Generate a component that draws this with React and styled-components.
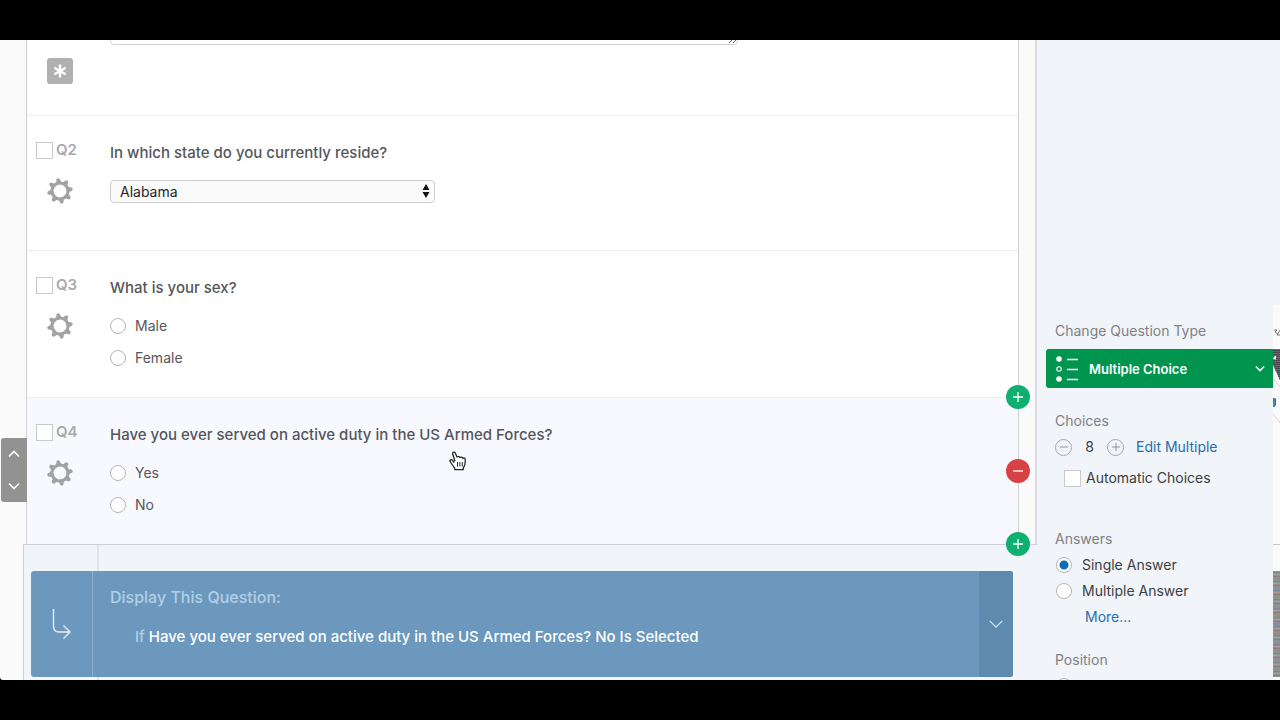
import React from 'react'
import styled, { createGlobalStyle } from 'styled-components'

const colors = {
  text: '#54565b',
  dark: '#3c3e44',
  muted: '#a9a9ab',
  heading: '#808185',
  line: '#cfd0d4',
  softLine: '#ededee',
  panel: '#f1f4f9',
  active: '#f8f9fe',
  blue: '#6b98bc',
  blueDark: '#5e8aae',
  link: '#1f6fb2',
  green: '#00954f',
  add: '#0eaf70',
  remove: '#d64143',
}

const TEETH = [0, 45, 90, 135, 180, 225, 270, 315]

const Gear = () => (
  <svg width="26" height="26" viewBox="-13 -13 26 26" aria-hidden="true">
    <g transform="rotate(-9)" fill="#a2a2a3">
      <circle r="8" fill="none" stroke="#a2a2a3" strokeWidth="3.2" />
      {TEETH.map((a) => (
        <path key={a} d="M-2.6 -8.6 L-1.5 -12.2 Q0 -13.4 1.5 -12.2 L2.6 -8.6 Z" transform={`rotate(${a})`} />
      ))}
    </g>
  </svg>
)

const Chevron = ({ w = 12, up = false, stroke = 1.6 }) => (
  <svg width={w} height={w / 2 + 2} viewBox="0 0 12 8" fill="none" stroke="currentColor" strokeWidth={stroke} aria-hidden="true">
    <path d={up ? 'M1 6.5 L6 1.5 L11 6.5' : 'M1 1.5 L6 6.5 L11 1.5'} />
  </svg>
)

const Sign = ({ plus = false, size = 12, stroke = 1.3 }) => (
  <svg width={size} height={size} viewBox="0 0 12 12" fill="none" stroke="currentColor" strokeWidth={stroke} aria-hidden="true">
    <path d={plus ? 'M1 6 H11 M6 1 V11' : 'M1 6 H11'} />
  </svg>
)

const ListIcon = () => (
  <svg width="24" height="28" viewBox="0 0 24 28" fill="none" stroke="#fff" aria-hidden="true">
    <circle cx="4" cy="4" r="2.8" fill="#fff" stroke="none" />
    <circle cx="4" cy="14" r="2.2" strokeWidth="1.1" />
    <circle cx="4" cy="24" r="2.8" fill="#fff" stroke="none" />
    <path d="M12 4.5 H23 M12 14.5 H23 M12 24.5 H23" strokeWidth="1.4" />
  </svg>
)

const Branch = () => (
  <svg width="20" height="32" viewBox="0 0 20 32" fill="none" stroke="#e4eff8" strokeWidth="1.4" aria-hidden="true">
    <path d="M1.5 1 V18 Q1.5 24 7 24 H18 M11.5 17.5 L18 24 L11.5 30.5" />
  </svg>
)

const Edge = () => (
  <svg width="7" height="640" viewBox="0 0 7 640" aria-hidden="true">
    <defs>
      <pattern id="lines" width="7" height="9" patternUnits="userSpaceOnUse">
        <rect width="7" height="9" fill="#8f9291" />
        <rect y="1" width="7" height="1" fill="#77899c" />
        <rect y="3" width="7" height="1" fill="#a5a192" />
        <rect y="5" width="7" height="1" fill="#9a7588" />
        <rect y="7" width="7" height="1" fill="#839a83" />
      </pattern>
      <pattern id="dark" width="7" height="4" patternUnits="userSpaceOnUse">
        <rect width="7" height="4" fill="#4b454c" />
        <rect y="1" width="7" height="1" fill="#7b6186" />
        <rect y="3" width="7" height="1" fill="#5c6a58" />
      </pattern>
    </defs>
    <rect width="7" height="640" fill={colors.panel} />
    <rect y="265" width="7" height="375" fill="#fafafb" />
    <path d="M1 290 H4 L2 292 L5 294 M7 290 L4 295 H7" fill="none" stroke="#77777a" />
    <rect y="309" width="7" height="23" fill="url(#dark)" />
    <path d="M1 317 L7 322" stroke="#fff" strokeWidth="3" />
    <path d="M0 325 L7 341 V309" fill="url(#dark)" />
    <path d="M0 325 L7 341 V375 L0 340 Z" fill="#fafafb" />
    <path d="M0 338 L7 347 M0 374 L7 383" stroke="#d5d5d8" />
    <path d="M1 358 V367" stroke="#4e83a6" strokeWidth="2" />
    <path d="M2 362 H3" stroke="#65517f" strokeWidth="7" />
    <path d="M0 504.500 H7" stroke="#c7c8cc" />
    <rect y="531" width="7" height="106" fill="url(#lines)" />
  </svg>
)

const Hand = () => (
  <svg width="18" height="20" viewBox="0 0 18 20" aria-hidden="true">
    <path
      d="M5.200 11.500 L3.600 9.400 Q2.300 8.200 1.300 9 Q.6 9.800 1.500 11 L4.200 15 Q5 16.300 5.700 17 V18.600 H14.300 V17 Q16.200 14.500 16.200 11 V8.300 Q16 6.800 14.600 7 L13.800 7.300 Q13.400 5.900 12 6.100 L11 6.500 Q10.400 5.300 9 5.600 L8 6 L6.400 2.200 Q5.700 .8 4.500 1.200 Q3.300 1.700 3.800 3.300 L6 10.200"
      fill="#fff"
      stroke="#252528"
      strokeWidth="1.300"
      strokeLinejoin="round"
    />
    <path d="M8.500 11 V15.500 M10.900 11 V15.500 M13.300 11 V15.500" stroke="#252528" strokeWidth="1" />
  </svg>
)

const Question = ({ id, title, active, options, children }) => (
  <Row $active={active}>
    <Meta>
      <Tag>
        <Tick type="checkbox" />
        {id}
      </Tag>
      <GearButton aria-label={`${id} options`}>
        <Gear />
      </GearButton>
    </Meta>
    <Content>
      <Title>{title}</Title>
      {options && (
        <Options>
          {options.map((o) => (
            <Option key={o}>
              <Dot type="radio" name={id} />
              {o}
            </Option>
          ))}
        </Options>
      )}
      {children}
    </Content>
  </Row>
)

const App = () => {
  return (
    <Screen>
      <Global />
      <Editor>
        <Main>
          <Survey>
            <Questions>
              <FirstRow>
                <Meta>
                  <Required aria-label="Required">
                    <svg width="14" height="14" viewBox="-7 -7 14 14" stroke="#fff" strokeWidth="2.400" aria-hidden="true">
                      <path d="M0 -6.500 V6.500 M-5.600 -3.200 L5.600 3.200 M-5.600 3.200 L5.600 -3.200" />
                    </svg>
                  </Required>
                </Meta>
                <Content>
                  <Answer aria-label="Answer" />
                </Content>
              </FirstRow>
              <Question id="Q2" title="In which state do you currently reside?">
                <Picker>
                  <State aria-label="State" defaultValue="Alabama">
                    <option>Alabama</option>
                  </State>
                  <Arrows width="8" height="14" viewBox="0 0 8 14" aria-hidden="true">
                    <path d="M4 0 L7.500 6 H.5 Z M4 14 L.5 8 H7.500 Z" fill="#111" />
                  </Arrows>
                </Picker>
              </Question>
              <Question id="Q3" title="What is your sex?" options={['Male', 'Female']} />
              <ActiveWrap>
                <Question id="Q4" title="Have you ever served on active duty in the US Armed Forces?" active options={['Yes', 'No']} />
                <Rail>
                  <Round aria-label="Add question above" $color={colors.add}><Sign plus /></Round>
                  <Round aria-label="Remove question" $color={colors.remove}><Sign /></Round>
                  <Round aria-label="Add question below" $color={colors.add}><Sign plus /></Round>
                </Rail>
                <Pointer><Hand /></Pointer>
              </ActiveWrap>
            </Questions>
          </Survey>
          <Next>
            <Logic>
              <LogicIcon><Branch /></LogicIcon>
              <LogicBody>
                <LogicTitle>Display This Question:</LogicTitle>
                <LogicRule>
                  <span>If</span> Have you ever served on active duty in the US Armed Forces? No Is Selected
                </LogicRule>
              </LogicBody>
              <LogicMenu aria-label="Logic menu"><Chevron w={16} stroke={1.1} /></LogicMenu>
            </Logic>
          </Next>
          <Mover>
            <MoveButton aria-label="Move up"><Chevron up /></MoveButton>
            <MoveButton aria-label="Move down"><Chevron /></MoveButton>
          </Mover>
        </Main>
        <Side>
          <SideHead>Change Question Type</SideHead>
          <TypeButton>
            <ListIcon />
            <span>Multiple Choice</span>
            <Chevron w={10} stroke={1.8} />
          </TypeButton>
          <Group>
            <SideHead>Choices</SideHead>
            <Stepper>
              <Step aria-label="Fewer choices"><Sign size={10} stroke={1.2} /></Step>
              <Count>8</Count>
              <Step aria-label="More choices"><Sign plus size={10} stroke={1.2} /></Step>
              <Link href="#edit">Edit Multiple</Link>
            </Stepper>
            <AutoLabel>
              <Tick type="checkbox" />
              Automatic Choices
            </AutoLabel>
          </Group>
          <Group $gap={41}>
            <SideHead>Answers</SideHead>
            <SideOption><Dot type="radio" name="answers" defaultChecked />Single Answer</SideOption>
            <SideOption><Dot type="radio" name="answers" />Multiple Answer</SideOption>
            <More href="#more">More...</More>
          </Group>
          <Group>
            <SideHead>Position</SideHead>
            <SideOption><Dot type="radio" name="position" aria-label="Position" /></SideOption>
          </Group>
        </Side>
        <Edge />
      </Editor>
    </Screen>
  )
}

const Global = createGlobalStyle`
* { box-sizing: border-box; }
body { margin: 0; background: #000; }
button, input, select, textarea { font: inherit; margin: 0; }
button { border: 0; padding: 0; background: none; }
`

const Screen = styled.div`
height: 100vh;
padding: 40px 0;
background: #000;
overflow: hidden;
font-family: Inter, "Liberation Sans", sans-serif;
font-size: 14px;
line-height: 20px;
color: ${colors.text};
`

const Editor = styled.div`
display: flex;
height: 100%;
overflow: hidden;
background: #fafafa;
border-bottom-left-radius: 3px;
`

const Main = styled.main`
position: relative;
display: flex;
flex-direction: column;
flex: 1;
min-width: 0;
padding-left: 23px;
`

const Survey = styled.div`
padding: 0 16px 0 3px;
border-right: 2px solid #dadce2;
`

const Questions = styled.div`
background: #fff;
border: solid ${colors.line};
border-width: 0 1px;
`

const Row = styled.section`
display: grid;
grid-template-columns: 83px 1fr;
padding: 24px 0 28px;
background: ${(p) => (p.$active ? colors.active : '#fff')};
border-bottom: ${(p) => (p.$active ? '0' : `1px solid ${colors.softLine}`)};
`

const FirstRow = styled(Row)`
padding: 18px 0 31px;
`

const Meta = styled.div`
display: flex;
flex-direction: column;
gap: 18px;
padding-left: 9px;
`

const Tag = styled.label`
display: flex;
align-items: center;
gap: 3px;
font-size: 15px;
font-weight: 600;
color: ${colors.muted};
`

const Tick = styled.input`
appearance: none;
width: 17px;
height: 17px;
background: #fff;
border: 1px solid #c9c9cb;
`

const GearButton = styled.button`
display: flex;
width: 26px;
margin-left: 11px;
`

const Required = styled.button`
display: grid;
place-items: center;
width: 26px;
height: 26px;
margin-left: 11px;
border-radius: 3px;
background: #b0b0b1;
`

const Content = styled.div`
display: flex;
flex-direction: column;
align-items: flex-start;
min-width: 0;
`

const Answer = styled.textarea`
width: 628px;
max-width: 100%;
height: 60px;
margin: -73px 0 0;
border: 1px solid #cfcfd1;
border-radius: 4px;
`

const Title = styled.div`
font-size: 15px;
font-weight: 500;
line-height: 26px;
margin-bottom: 14px;
`

const Options = styled.div`
display: flex;
flex-direction: column;
gap: 10px;
`

const Option = styled.label`
display: flex;
align-items: center;
gap: 9px;
line-height: 22px;
`

const Dot = styled.input`
appearance: none;
width: 16px;
height: 16px;
border: 1px solid #b5b5b9;
border-radius: 50%;
background: #fff;

&:checked {
  background: radial-gradient(circle, #0f6db5 0 4px, #fff 5px);
}
`

const Picker = styled.div`
position: relative;
width: 325px;
margin-bottom: 19px;
`

const State = styled.select`
appearance: none;
display: block;
width: 100%;
height: 23px;
padding: 0 9px;
border: 1px solid #cdcdcf;
border-radius: 4px;
background: #fafafa;
color: #26262a;
`

const Arrows = styled.svg`
position: absolute;
right: 5px;
top: 4px;
pointer-events: none;
`

const ActiveWrap = styled.div`
position: relative;
`

const Rail = styled.div`
position: absolute;
top: -13px;
bottom: -12px;
right: -12px;
display: flex;
flex-direction: column;
justify-content: space-between;
z-index: 2;
`

const Round = styled.button`
display: grid;
place-items: center;
width: 24px;
height: 24px;
border-radius: 50%;
color: #fff;
background: ${(p) => p.$color};
`

const Pointer = styled.div`
position: absolute;
left: 422px;
top: 53px;
line-height: 0;
`

const Next = styled.div`
flex: 1;
padding: 26px 24px 0 7px;
border: solid ${colors.line};
border-width: 1px 0 0 1px;
background: linear-gradient(#e0e3ea, #e0e3ea) 73px 0 / 2px 100% no-repeat ${colors.panel};
`

const Logic = styled.div`
display: grid;
grid-template-columns: 62px 1fr 34px;
height: 106px;
border-radius: 3px;
overflow: hidden;
background: ${colors.blue};
`

const LogicIcon = styled.div`
display: grid;
place-items: center;
border-right: 1px solid #8bb0cd;
`

const LogicBody = styled.div`
display: flex;
flex-direction: column;
gap: 16px;
padding: 14px 17px;
font-size: 15px;
line-height: 24px;
font-weight: 500;
`

const LogicTitle = styled.div`
font-size: 16px;
color: #b0cfe8;
`

const LogicRule = styled.div`
padding-left: 25px;
color: #fff;

span {
  color: #b0cfe8;
}
`

const LogicMenu = styled.button`
display: grid;
place-items: center;
color: #cfe2f2;
background: ${colors.blueDark};
`

const Mover = styled.div`
position: absolute;
left: 1px;
top: 398px;
display: flex;
flex-direction: column;
width: 26px;
border-radius: 3px 0 0 3px;
background: #929292;
`

const MoveButton = styled.button`
display: grid;
place-items: center;
height: 32px;
color: #fff;
`

const Side = styled.aside`
width: 236px;
padding: 281px 0 0 9px;
overflow: hidden;
background: ${colors.panel};
color: ${colors.dark};
`

const SideHead = styled.div`
padding-left: 9px;
color: ${colors.heading};
`

const TypeButton = styled.button`
display: grid;
grid-template-columns: 24px 1fr 10px;
gap: 10px;
align-items: center;
width: 100%;
height: 39px;
margin-top: 8px;
padding: 0 8px 0 9px;
border-radius: 3px 0 0 3px;
background: ${colors.green};
color: #fff;
font-size: 13px;
font-weight: 600;
text-align: left;
`

const Group = styled.div`
display: flex;
flex-direction: column;
gap: 6px;
margin-top: ${(p) => p.$gap || 23}px;
`

const Stepper = styled.div`
display: flex;
align-items: center;
padding-left: 9px;
`

const Step = styled.button`
display: grid;
place-items: center;
width: 17px;
height: 17px;
border: 1px solid #a4a6aa;
border-radius: 50%;
color: #909296;
`

const Count = styled.span`
width: 35px;
text-align: center;
`

const Link = styled.a`
margin-left: 12px;
color: ${colors.link};
text-decoration: none;
`

const AutoLabel = styled.label`
display: flex;
align-items: center;
gap: 5px;
padding: 5px 0 0 18px;
`

const SideOption = styled.label`
display: flex;
align-items: center;
gap: 10px;
min-height: 20px;
padding-left: 10px;
`

const More = styled(Link)`
margin-left: 39px;
`

export default App
